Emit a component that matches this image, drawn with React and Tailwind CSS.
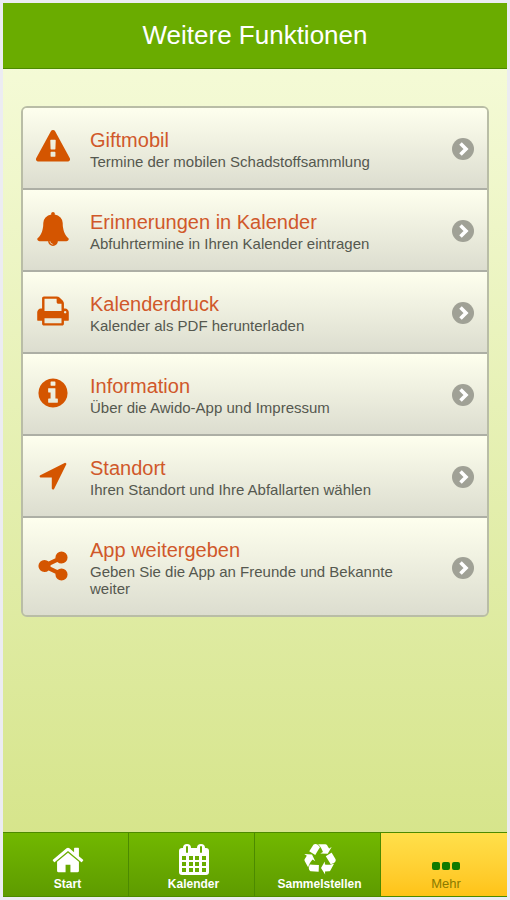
import React from "react";

const ICONS = {
  warning:
    "M1024 1375v-190q0-14-9.5-23.5t-22.5-9.5h-192q-13 0-22.5 9.5t-9.5 23.5v190q0 14 9.5 23.5t22.5 9.5h192q13 0 22.5-9.5t9.5-23.5zm-2-374l18-459q0-12-10-19-13-11-24-11h-220q-11 0-24 11-10 7-10 21l17 457q0 10 10 16.5t24 6.5h185q14 0 23.5-6.5t10.5-16.5zm-14-934l768 1408q35 63-2 126-17 29-46.5 46t-63.5 17h-1536q-34 0-63.5-17t-46.5-46q-37-63-2-126l768-1408q17-31 47-49t65-18 65 18 47 49z",
  bell:
    "M912 1696q0-16-16-16-59 0-101.5-42.5t-42.5-101.5q0-16-16-16t-16 16q0 73 51.5 124.5t124.5 51.5q16 0 16-16zm816-288q0 52-38 90t-90 38h-448q0 106-75 181t-181 75-181-75-75-181h-448q-52 0-90-38t-38-90q50-42 91-88t85-119.5 74.5-158.5 50-206 19.5-260q0-152 117-282.5t307-158.5q-8-19-8-39 0-40 28-68t68-28 68 28 28 68q0 20-8 39 190 28 307 158.5t117 282.5q0 139 19.5 260t50 206 74.5 158.5 85 119.5 91 88z",
  print:
    "M448 1536h896v-256h-896v256zm0-640h896v-384h-160q-40 0-68-28t-28-68v-160h-640v640zm1152 64q0-26-19-45t-45-19-45 19-19 45 19 45 45 19 45-19 19-45zm128 0v416q0 13-9.5 22.5t-22.5 9.5h-224v160q0 40-28 68t-68 28h-960q-40 0-68-28t-28-68v-160h-224q-13 0-22.5-9.5t-9.5-22.5v-416q0-79 56.5-135.5t135.5-56.5h64v-544q0-40 28-68t68-28h672q40 0 88 20t76 48l152 152q28 28 48 76t20 88v256h64q79 0 135.5 56.5t56.5 135.5z",
  info:
    "M1152 1376v-160q0-14-9-23t-23-9h-96v-512q0-14-9-23t-23-9h-320q-14 0-23 9t-9 23v160q0 14 9 23t23 9h96v320h-96q-14 0-23 9t-9 23v160q0 14 9 23t23 9h448q14 0 23-9t9-23zm-128-896v-160q0-14-9-23t-23-9h-192q-14 0-23 9t-9 23v160q0 14 9 23t23 9h192q14 0 23-9t9-23zm640 416q0 209-103 385.5t-279.5 279.5-385.5 103-385.5-103-279.5-279.5-103-385.5 103-385.5 279.5-279.5 385.5-103 385.5 103 279.5 279.5 103 385.5z",
  location:
    "M1593 349l-640 1280q-17 35-57 35-5 0-15-2-22-5-35.5-22.5t-13.5-39.5v-576h-576q-22 0-39.5-13.5t-22.5-35.5 4-42 29-30l1280-640q13-7 29-7 27 0 45 19 15 14 18.5 34.5t-6.5 39.5z",
  share:
    "M1344 1024q133 0 226.5 93.5t93.5 226.5-93.5 226.5-226.5 93.5-226.5-93.5-93.5-226.5q0-12 2-34l-360-180q-92 86-218 86-133 0-226.5-93.5t-93.5-226.5 93.5-226.5 226.5-93.5q126 0 218 86l360-180q-2-22-2-34 0-133 93.5-226.5t226.5-93.5 226.5 93.5 93.5 226.5-93.5 226.5-226.5 93.5q-126 0-218-86l-360 180q2 22 2 34t-2 34l360 180q92-86 218-86z",
  home:
    "M1472 992v480q0 26-19 45t-45 19h-384v-384h-256v384h-384q-26 0-45-19t-19-45v-480q0-1 .5-3t.5-3l575-474 575 474q1 2 1 6zm223-69l-62 74q-8 9-21 11h-3q-13 0-21-7l-692-577-692 577q-12 8-24 7-13-2-21-11l-62-74q-8-10-7-23.5t11-21.5l719-599q32-26 76-26t76 26l244 204v-195q0-14 9-23t23-9h192q14 0 23 9t9 23v408l219 182q10 8 11 21.5t-7 23.5z",
  recycle:
    "M836 1169l-15 368-2 22-420-29q-36-3-67-31.5t-47-65.5q-11-27-14.5-55t4-65 12-55 21.5-64 19-53q78 12 509 28zm-387-586l180 379-147-92q-63 72-111.5 144.5t-72.5 125-39.5 94.5-18.5 63l-4 21-190-357q-17-26-18-56t6-47l8-18q35-63 114-188l-140-86zm1231 517l-188 359q-12 29-36.5 46.5t-43.5 20.5l-18 4q-71 7-219 12l8 164-230-367 211-362 7 173q170 16 283 5t170-33zm-785-924q-47 63-265 435l-317-187-19-12 225-356q20-31 60-45t80-10q24 2 48.5 12t42 21 41.5 33 36 34.5 36 39.5 32 35zm655 307l212 363q18 37 12.5 76t-27.5 74q-13 20-33 37t-38 28-48.5 22-47 16-51.5 14-46 12q-34-72-265-436l313-195zm-143-226l142-83-220 373-419-20 151-86q-34-89-75-166t-75.5-123.5-64.5-80-47-46.5l-17-13 405 1q31-3 58 10.5t39 28.5l11 15q39 61 112 190z",
};

const Icon = ({ name, className }) => (
  <svg viewBox="0 0 1792 1792" className={className} fill="currentColor" aria-hidden="true">
    <path d={ICONS[name]} />
  </svg>
);

const CalendarIcon = ({ className }) => (
  <svg viewBox="0 0 30 32" className={className} aria-hidden="true">
    <rect x="0" y="4" width="30" height="27" rx="3" fill="#fff" />
    <rect x="4" y="0" width="8" height="10" rx="4" fill="#fff" />
    <rect x="18" y="0" width="8" height="10" rx="4" fill="#fff" />
    <g fill="#6aac00">
      <rect x="7" y="2" width="2" height="7" rx="1" />
      <rect x="21" y="2" width="2" height="7" rx="1" />
      {[12, 18, 24].map((y) =>
        [3, 10, 16, 23].map((x) => <rect key={`${x}-${y}`} x={x} y={y} width="4" height="4" />)
      )}
    </g>
  </svg>
);

const DotsIcon = ({ className }) => (
  <svg viewBox="0 0 28 8" className={className} fill="currentColor" aria-hidden="true">
    <rect x="0" y="0" width="8" height="8" rx="2" />
    <rect x="10" y="0" width="8" height="8" rx="2" />
    <rect x="20" y="0" width="8" height="8" rx="2" />
  </svg>
);

const ArrowBadge = () => (
  <svg viewBox="0 0 22 22" className="size-[22px] shrink-0" aria-hidden="true">
    <circle cx="11" cy="11" r="11" fill="#a0a196" />
    <path d="M8.5 5.5l5.5 5.5-5.5 5.5" fill="none" stroke="#fff" strokeWidth="3.6" />
  </svg>
);

const entries = [
  { icon: "warning", title: "Giftmobil", text: "Termine der mobilen Schadstoffsammlung" },
  { icon: "bell", title: "Erinnerungen in Kalender", text: "Abfuhrtermine in Ihren Kalender eintragen" },
  { icon: "print", title: "Kalenderdruck", text: "Kalender als PDF herunterladen" },
  { icon: "info", title: "Information", text: "Über die Awido-App und Impressum" },
  { icon: "location", title: "Standort", text: "Ihren Standort und Ihre Abfallarten wählen" },
  { icon: "share", title: "App weitergeben", text: "Geben Sie die App an Freunde und Bekannte weiter" },
];

const MenuEntry = ({ icon, title, text }) => (
  <li className="border-b-2 border-[#adafa5] last:border-b-0">
    <a
      href="#"
      className="flex items-center bg-linear-to-b from-[#feffee] to-[#dcddcf] px-[13px] pt-5 pb-[18px]"
    >
      <Icon name={icon} className="mb-1 size-[34px] shrink-0 text-[#d45500]" />
      <div className="mr-14 ml-5 min-w-0 flex-1">
        <h2 className="mb-px text-[20px] leading-6 text-[#d0582a]">{title}</h2>
        <p className="text-[15px] leading-[17px] text-[#55584f]">{text}</p>
      </div>
      <ArrowBadge />
    </a>
  </li>
);

const tabs = [
  { label: "Start", icon: <Icon name="home" className="size-[34px]" /> },
  { label: "Kalender", icon: <CalendarIcon className="h-8 w-[30px]" /> },
  { label: "Sammelstellen", icon: <Icon name="recycle" className="size-8" /> },
  { label: "Mehr", icon: <DotsIcon className="h-2 w-7" />, active: true },
];

const TabBar = () => (
  <nav className="grid grid-cols-4 border-y border-[#4c8a00]">
    {tabs.map(({ label, icon, active }) => (
      <a
        key={label}
        href="#"
        className={`flex h-[63px] flex-col items-center justify-end pb-1 pl-1 leading-4 ${
          active
            ? "bg-linear-to-b from-[#ffe04a] to-[#ffc315] text-[13px] text-[#8a7a00]"
            : "border-r border-[#4c8a00] bg-linear-to-b from-[#72b800] to-[#5e9b00] text-[12px] font-bold text-white"
        }`}
      >
        <span className={`flex h-8 items-center ${active ? "pt-3 text-[#0f7a00]" : ""}`}>{icon}</span>
        {label}
      </a>
    ))}
  </nav>
);

const App = () => (
  <div className="flex min-h-screen flex-col bg-[#ececf2] p-[3px] font-['Liberation_Sans',Arial,sans-serif]">
    <div className="flex flex-1 flex-col bg-linear-to-b from-[#f7fcdc] to-[#d4e385]">
      <header className="border-b border-[#4c8a00] bg-[#6aac00] py-4">
        <h1 className="text-center text-[26px] leading-[33px] text-white">Weitere Funktionen</h1>
      </header>
      <main className="flex-1 px-[18px] pt-[37px]">
        <ul className="overflow-hidden rounded-md border-2 border-[#b9bda6]">
          {entries.map((entry) => (
            <MenuEntry key={entry.title} {...entry} />
          ))}
        </ul>
      </main>
      <TabBar />
    </div>
  </div>
);

export default App;
